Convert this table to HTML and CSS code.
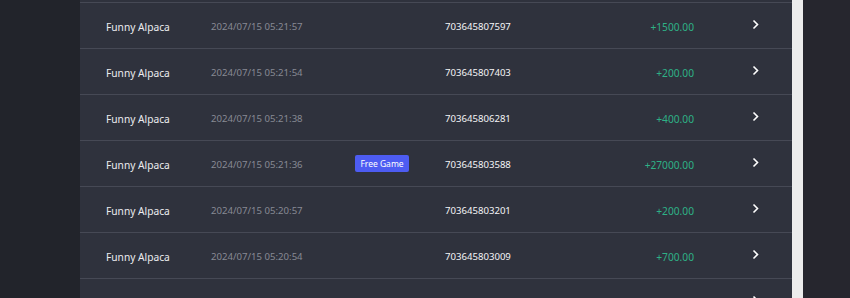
FILE: index.html
```html
<!DOCTYPE html>
<html>
<head>
<meta charset="utf-8">
<link rel="stylesheet" href="styles.css">
</head>
<body>
<div class="page">
  <div class="side"></div>
  <div class="table">
    <div class="row"><span class="name">Funny Alpaca</span><span class="date">2024/07/15 05:21:57</span><span class="tag"></span><span class="id">703645807597</span><span class="amt">+1500.00</span><span class="chev"><svg width="8" height="11" viewBox="0 0 8 11"><path d="M1.5 1.5 L5.5 5.5 L1.5 9.5" fill="none" stroke="#fff" stroke-width="1.6"/></svg></span></div>
    <div class="row"><span class="name">Funny Alpaca</span><span class="date">2024/07/15 05:21:54</span><span class="tag"></span><span class="id">703645807403</span><span class="amt">+200.00</span><span class="chev"><svg width="8" height="11" viewBox="0 0 8 11"><path d="M1.5 1.5 L5.5 5.5 L1.5 9.5" fill="none" stroke="#fff" stroke-width="1.6"/></svg></span></div>
    <div class="row"><span class="name">Funny Alpaca</span><span class="date">2024/07/15 05:21:38</span><span class="tag"></span><span class="id">703645806281</span><span class="amt">+400.00</span><span class="chev"><svg width="8" height="11" viewBox="0 0 8 11"><path d="M1.5 1.5 L5.5 5.5 L1.5 9.5" fill="none" stroke="#fff" stroke-width="1.6"/></svg></span></div>
    <div class="row"><span class="name">Funny Alpaca</span><span class="date">2024/07/15 05:21:36</span><span class="tag"><span class="badge">Free Game</span></span><span class="id">703645803588</span><span class="amt">+27000.00</span><span class="chev"><svg width="8" height="11" viewBox="0 0 8 11"><path d="M1.5 1.5 L5.5 5.5 L1.5 9.5" fill="none" stroke="#fff" stroke-width="1.6"/></svg></span></div>
    <div class="row"><span class="name">Funny Alpaca</span><span class="date">2024/07/15 05:20:57</span><span class="tag"></span><span class="id">703645803201</span><span class="amt">+200.00</span><span class="chev"><svg width="8" height="11" viewBox="0 0 8 11"><path d="M1.5 1.5 L5.5 5.5 L1.5 9.5" fill="none" stroke="#fff" stroke-width="1.6"/></svg></span></div>
    <div class="row"><span class="name">Funny Alpaca</span><span class="date">2024/07/15 05:20:54</span><span class="tag"></span><span class="id">703645803009</span><span class="amt">+700.00</span><span class="chev"><svg width="8" height="11" viewBox="0 0 8 11"><path d="M1.5 1.5 L5.5 5.5 L1.5 9.5" fill="none" stroke="#fff" stroke-width="1.6"/></svg></span></div>
    <div class="row"><span class="name"></span><span class="date"></span><span class="tag"></span><span class="id"></span><span class="amt"></span><span class="chev"><svg width="8" height="11" viewBox="0 0 8 11"><path d="M1.5 1.5 L5.5 5.5 L1.5 9.5" fill="none" stroke="#fff" stroke-width="1.6"/></svg></span></div>
  </div>
  <div class="scroll"></div>
  <div class="right"></div>
</div>
</body>
</html>
```
FILE: styles.css
```css
html, body {
  margin: 0;
  padding: 0;
  height: 100%;
  overflow: hidden;
  background: #23252c;
  font-family: "Noto Sans", "Open Sans", sans-serif;
}
.page {
  display: flex;
  height: 298px;
  overflow: hidden;
}
.side {
  width: 80px;
  flex: none;
  background: #22242b;
}
.table {
  width: 712px;
  flex: none;
  background: #2f323d;
  padding-top: 2px;
}
.scroll {
  width: 11px;
  flex: none;
  background: #ececec;
}
.right {
  flex: 1;
  background: #26262e;
}
.row {
  display: grid;
  grid-template-columns: 105px 144px 90px 160px 89px 58px 8px;
  align-items: center;
  height: 43px;
  padding-top: 2px;
  border-top: 1px solid #464955;
  padding-left: 26px;
}
.name {
  color: #ececef;
  font-size: 10.2px;
}
.date {
  color: #878a94;
  font-size: 9.6px;
}
.tag {
  display: flex;
  align-items: center;
  margin-top: -2px;
}
.badge {
  background: #4d5cf2;
  color: #ffffff;
  font-size: 8.5px;
  border-radius: 2px;
  width: 54px;
  height: 17px;
  display: flex;
  align-items: center;
  justify-content: center;
}
.id {
  color: #f4f4f6;
  font-size: 9.6px;
}
.amt {
  color: #2eb186;
  font-size: 10.2px;
  text-align: right;
}
.chev {
  grid-column: 7;
  display: flex;
  margin-top: -5px;
}
```
